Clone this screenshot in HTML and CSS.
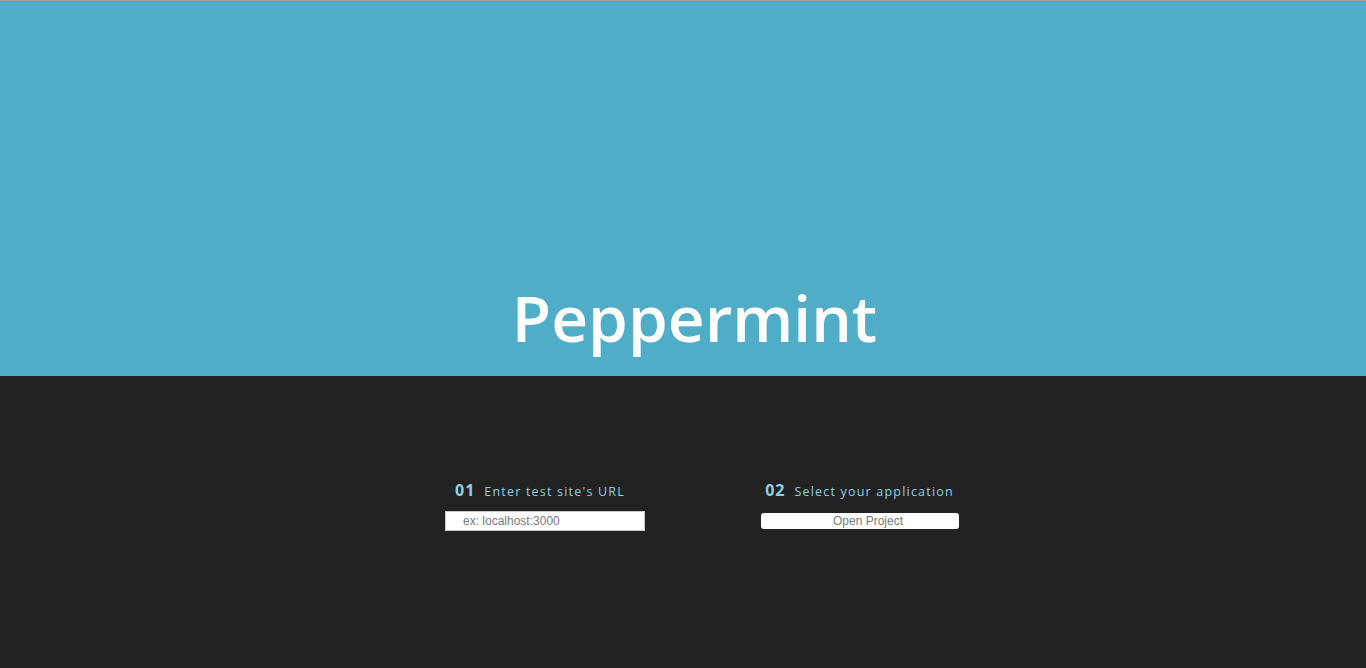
FILE: index.html
```html
<!DOCTYPE html>
<html lang="en">
<head>
<meta charset="utf-8">
<title>Peppermint</title>
<link rel="stylesheet" href="styles.css">
</head>
<body>
<header class="hero">
  <h1 class="hero-title">Peppermint</h1>
</header>
<main class="setup">
  <div class="steps">
    <section class="step step-url">
      <h2 class="step-head"><span class="step-num">01</span><span class="step-label">Enter test site's URL</span></h2>
      <input class="url-input" type="text" placeholder="ex: localhost:3000">
    </section>
    <section class="step step-app">
      <h2 class="step-head"><span class="step-num">02</span><span class="step-label">Select your application</span></h2>
      <button class="open-btn" type="button">Open Project</button>
    </section>
  </div>
</main>
</body>
</html>
```

FILE: styles.css
```css
html, body {
  margin: 0;
  padding: 0;
  height: 100%;
}
body {
  background: #222222;
  font-family: "Open Sans", "DejaVu Sans", sans-serif;
  display: flex;
  flex-direction: column;
}
.hero {
  height: 375px;
  border-top: 1px solid #a2a2a2;
  background: #4fadc7;
  display: flex;
  align-items: flex-end;
  justify-content: center;
  padding-left: 23px;
  box-sizing: content-box;
  flex-shrink: 0;
}
.hero-title {
  margin: 0 0 26px;
  color: #ffffff;
  font-size: 64px;
  font-weight: 600;
  line-height: 1;
  letter-spacing: 0;
}
.setup {
  flex: 1;
  background: #222222;
}
.steps {
  display: flex;
  justify-content: center;
  gap: 116px;
  padding: 103px 0 0 38px;
}
.step {
  display: flex;
  flex-direction: column;
  align-items: center;
}
.step-head {
  margin: 0;
  display: flex;
  align-items: baseline;
  gap: 9px;
  color: #8fd0e2;
  font-weight: normal;
  white-space: nowrap;
}
.step-num {
  font-size: 16px;
  font-weight: 700;
  letter-spacing: 1px;
}
.step-label {
  font-size: 12.5px;
  letter-spacing: 1.2px;
}
.step-url .step-head {
  margin-left: -10px;
}
.step-app .step-head {
  margin-left: -1px;
}
.url-input {
  margin-top: 10px;
  width: 200px;
  height: 20px;
  box-sizing: border-box;
  border: 1px solid #c9c9c9;
  background: #ffffff;
  padding: 0 0 0 17px;
  font-family: "Liberation Sans", Arial, sans-serif;
  font-size: 12px;
  color: #333;
  outline: none;
}
.url-input::placeholder {
  color: #7a7a7a;
}
.open-btn {
  margin-top: 12px;
  width: 198px;
  height: 16px;
  box-sizing: border-box;
  border: none;
  border-radius: 3px;
  background: #ffffff;
  padding: 0 0 0 16px;
  font-family: "Liberation Sans", Arial, sans-serif;
  font-size: 12px;
  line-height: 16px;
  color: #7a7a7a;
}
```
